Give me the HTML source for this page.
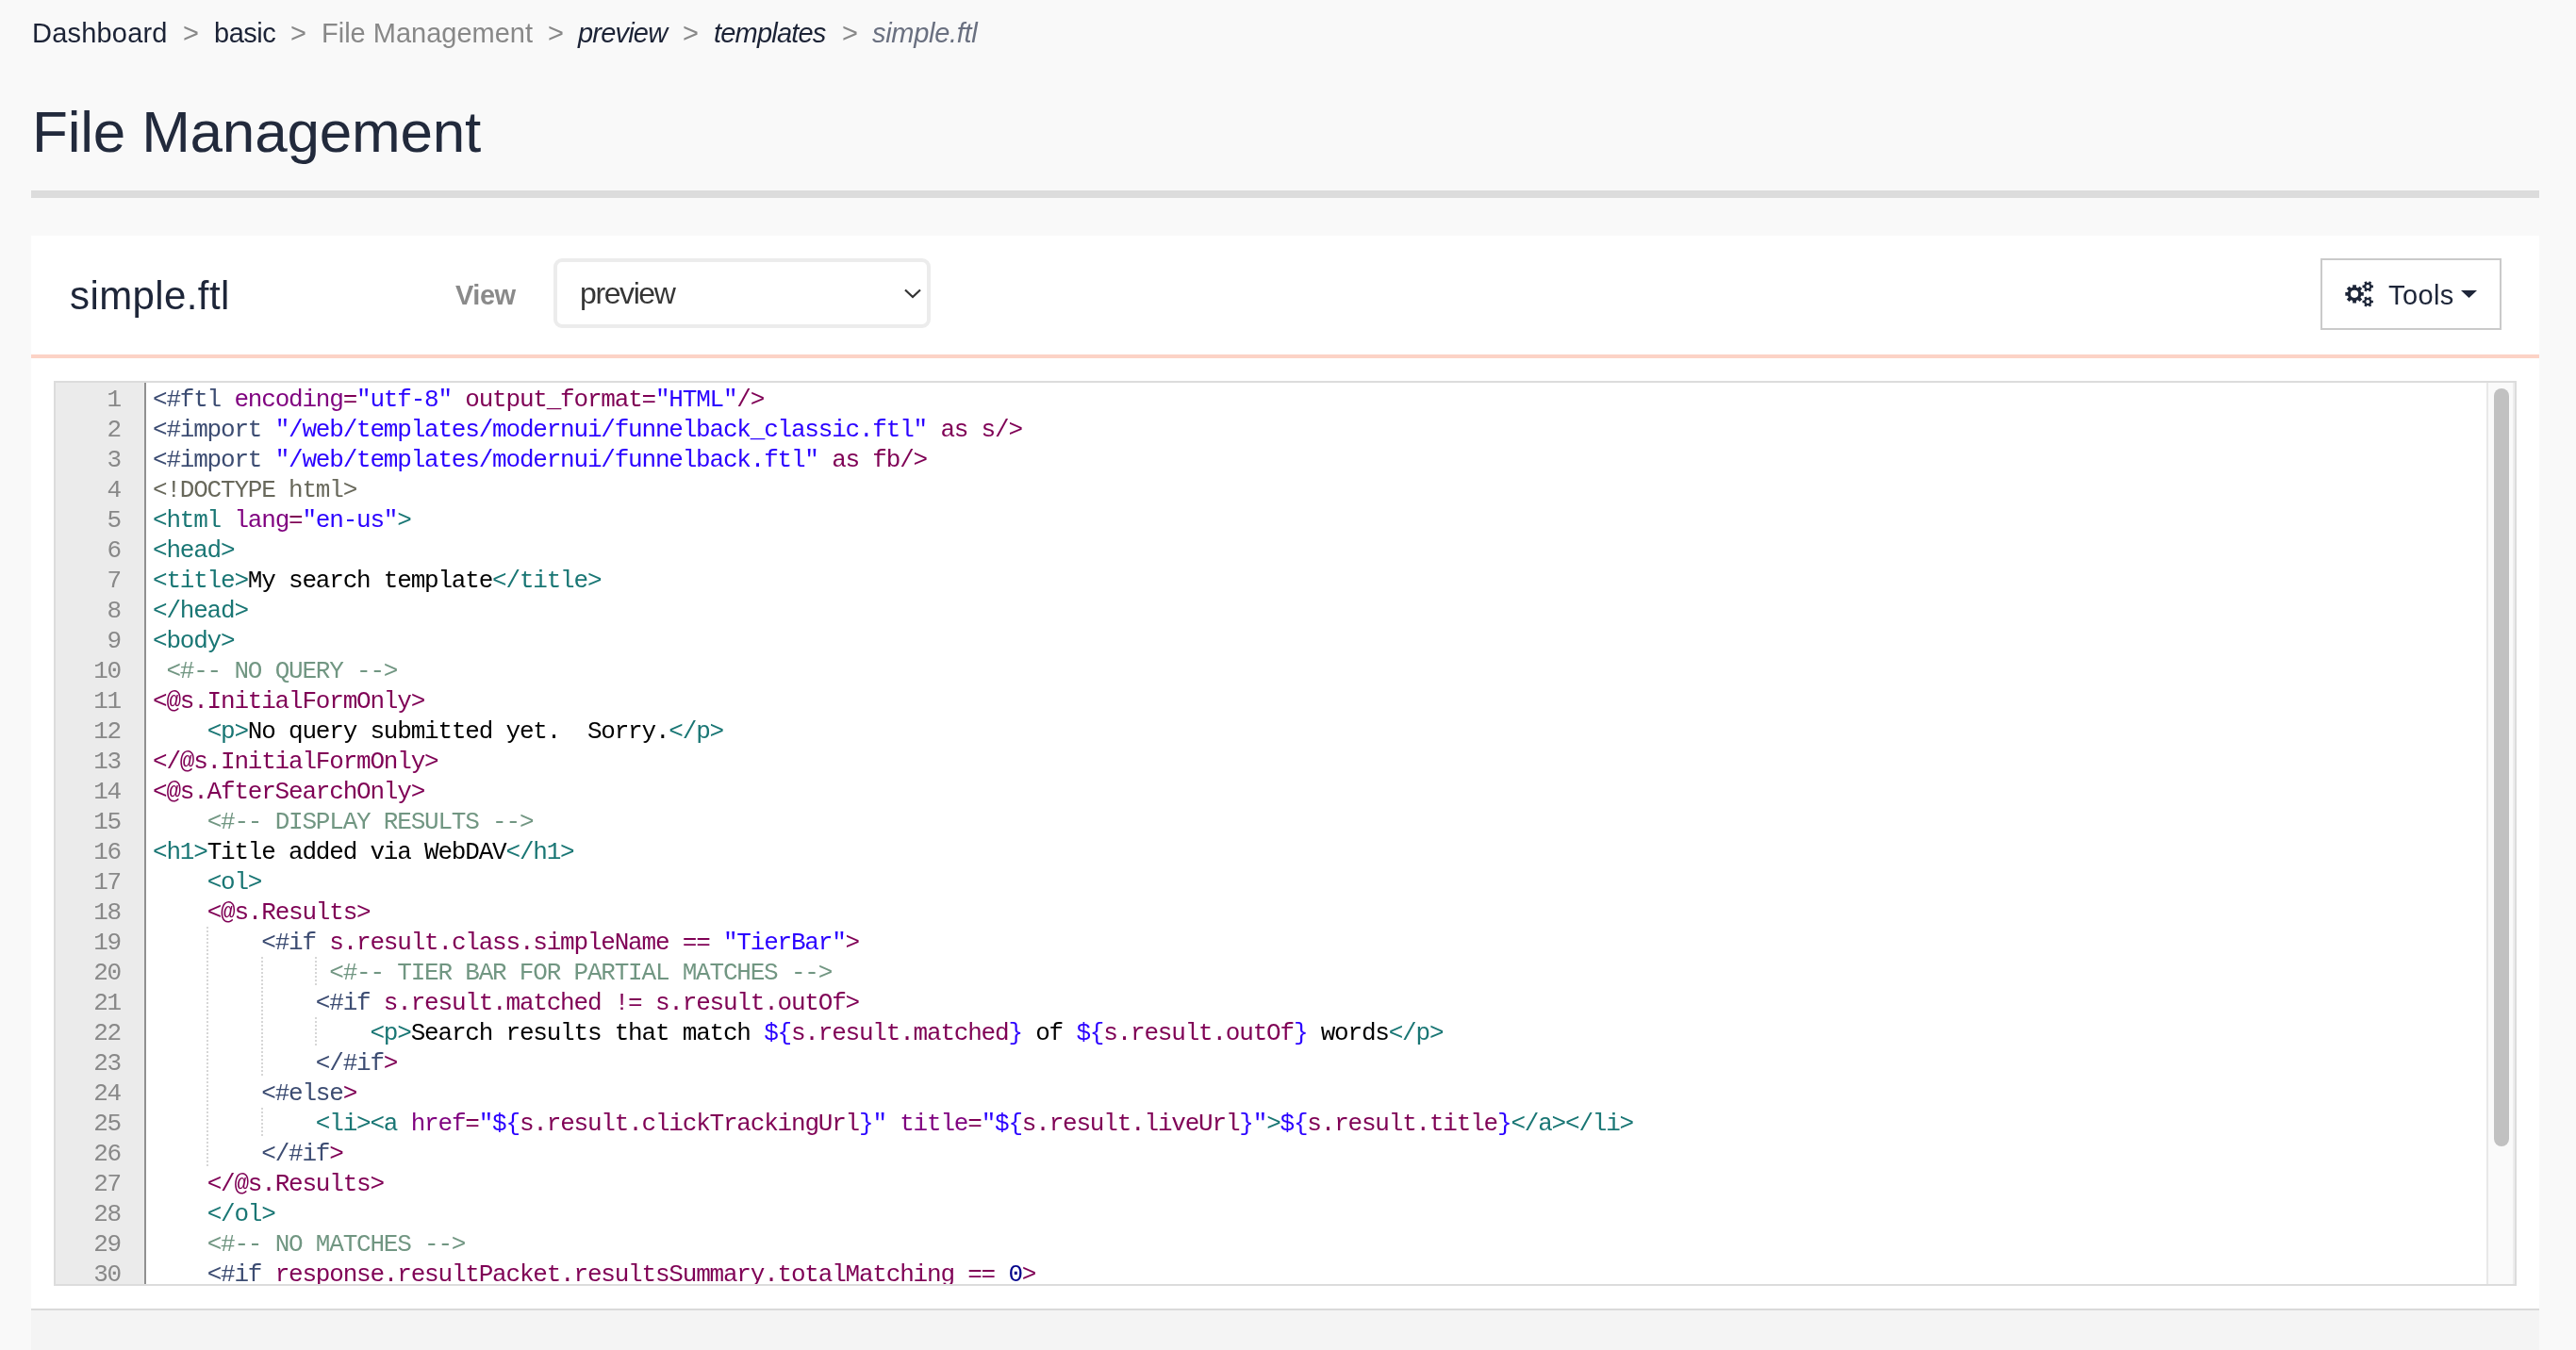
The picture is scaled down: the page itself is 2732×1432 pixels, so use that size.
<!DOCTYPE html>
<html><head><meta charset="utf-8">
<style>
html,body{margin:0;padding:0;} body>*{will-change:transform;}
body{width:2732px;height:1432px;overflow:hidden;background:#f9f9f9;position:relative;font-family:"Liberation Sans",sans-serif;color:#1e2639;}
.a{position:absolute;white-space:nowrap;}
.bc{font-size:29px;line-height:34px;top:18px;}
.g{color:#888;}
.navy{color:#1c2336;}
.it{font-style:italic;letter-spacing:-0.8px;}
h1{position:absolute;margin:0;font-weight:normal;font-size:62px;line-height:70px;left:34px;top:105px;color:#222a3c;letter-spacing:-0.2px;}
#bar{position:absolute;left:33px;top:202px;width:2660px;height:8px;background:#dcdcdc;}
#panel{position:absolute;left:33px;top:250px;width:2660px;height:1138px;background:#fff;}
#salmon{position:absolute;left:33px;top:376px;width:2660px;height:4px;background:#fcd3c6;}
#foot{position:absolute;left:33px;top:1388px;width:2660px;height:44px;background:#f4f4f4;border-top:2px solid #d9d9d9;box-sizing:border-box;}
#fname{font-size:42px;line-height:50px;left:73.5px;top:289px;color:#1e2639;letter-spacing:0.4px;}
#view{font-size:29px;font-weight:bold;color:#8a8a8a;left:483px;top:296px;line-height:34px;letter-spacing:-0.5px;}
#sel{position:absolute;left:587px;top:274px;width:400px;height:74px;box-sizing:border-box;border:4px solid #ececec;border-radius:9px;background:#fff;}
#seltxt{font-size:32px;line-height:38px;left:615px;top:292px;color:#363636;letter-spacing:-1.4px;}
#tools{position:absolute;left:2461px;top:274px;width:192px;height:76px;box-sizing:border-box;border:2px solid #cacaca;background:#fff;}
#toolstxt{font-size:29px;line-height:34px;left:2533px;top:296px;color:#1e2639;letter-spacing:0.4px;}
#editor{position:absolute;left:57px;top:404px;width:2612px;height:960px;box-sizing:border-box;border:2px solid #dcdcdc;background:#fff;overflow:hidden;}
#gutter{position:absolute;left:0;top:0;width:94px;height:956px;background:#ebebeb;border-right:2px solid #909090;}
.gn{position:absolute;right:25px;margin-top:2px;height:32px;line-height:32px;font-family:"Liberation Mono",monospace;font-size:26px;letter-spacing:-1.2px;color:#888;}
#code{position:absolute;left:103px;top:0;width:2470px;height:956px;}
.ln{position:absolute;left:0;margin-top:2px;height:32px;line-height:32px;white-space:pre;font-family:"Liberation Mono",monospace;font-size:26px;letter-spacing:-1.2px;color:#000;}
.ig{position:absolute;width:2px;height:32px;background-image:linear-gradient(transparent 25%,#d6d6d6 25%,#d6d6d6 75%,transparent 75%);background-size:2px 4px;}
.f{color:#3c4c72}.k{color:#7f0055}.p{color:#7f007f}.s{color:#2a00ff}.t{color:#197674}.c{color:#719682}.d{color:#68685b}.x{color:#000}.n{color:#00008b}
#track{position:absolute;left:2578px;top:0;width:30px;height:956px;box-sizing:border-box;background:#fafafa;border-left:2px solid #e8e8e8;border-right:2px solid #ededed;}
#thumb{position:absolute;left:6px;top:6px;width:16px;height:804px;border-radius:8px;background:#c1c1c1;}
</style></head><body>
<div class="a bc navy" style="left:34px;letter-spacing:0.2px">Dashboard</div>
<div class="a bc g" style="left:194px">&gt;</div>
<div class="a bc navy" style="left:227px;letter-spacing:-0.5px">basic</div>
<div class="a bc g" style="left:308px">&gt;</div>
<div class="a bc g" style="left:341px">File Management</div>
<div class="a bc g" style="left:581px">&gt;</div>
<div class="a bc navy it" style="left:613px">preview</div>
<div class="a bc g" style="left:724px">&gt;</div>
<div class="a bc navy it" style="left:757px">templates</div>
<div class="a bc g" style="left:893px">&gt;</div>
<div class="a bc it" style="left:925px;color:#6a7080;letter-spacing:-0.3px">simple.ftl</div>
<h1>File Management</h1>
<div id="bar"></div>
<div id="panel"></div>
<div id="salmon"></div>
<div id="foot"></div>
<div id="fname" class="a">simple.ftl</div>
<div id="view" class="a">View</div>
<div id="sel"></div>
<div id="seltxt" class="a">preview</div>
<svg class="a" style="left:959px;top:306px" width="18" height="11" viewBox="0 0 18 11"><path d="M1 1.5 L9 9 L17 1.5" fill="none" stroke="#333" stroke-width="2.2"/></svg>
<div id="tools"></div>
<svg class="a" style="left:2480px;top:292px" width="44" height="40" viewBox="0 0 44 40"><path fill="#1e2639" fill-rule="evenodd" d="M15.14 12.80 L15.14 10.13 L18.94 10.13 L18.94 12.80 L19.24 12.89 L19.54 12.99 L19.83 13.11 L20.12 13.23 L20.40 13.37 L20.68 13.52 L22.57 11.64 L25.25 14.32 L23.37 16.21 L23.52 16.49 L23.66 16.77 L23.78 17.06 L23.90 17.35 L24.00 17.65 L24.09 17.95 L26.76 17.95 L26.76 21.75 L24.09 21.75 L24.00 22.05 L23.90 22.35 L23.78 22.64 L23.66 22.93 L23.52 23.21 L23.37 23.49 L25.25 25.38 L22.57 28.06 L20.68 26.18 L20.40 26.33 L20.12 26.47 L19.83 26.59 L19.54 26.71 L19.24 26.81 L18.94 26.90 L18.94 29.57 L15.14 29.57 L15.14 26.90 L14.84 26.81 L14.54 26.71 L14.25 26.59 L13.96 26.47 L13.68 26.33 L13.40 26.18 L11.51 28.06 L8.83 25.38 L10.71 23.49 L10.56 23.21 L10.42 22.93 L10.30 22.64 L10.18 22.35 L10.08 22.05 L9.99 21.75 L7.32 21.75 L7.32 17.95 L9.99 17.95 L10.08 17.65 L10.18 17.35 L10.30 17.06 L10.42 16.77 L10.56 16.49 L10.71 16.21 L8.83 14.32 L11.51 11.64 L13.40 13.52 L13.68 13.37 L13.96 13.23 L14.25 13.11 L14.54 12.99 L14.84 12.89 Z M12.94 19.85 a4.10 4.10 0 1 0 8.20 0 a4.10 4.10 0 1 0 -8.20 0 Z M32.07 7.79 L32.93 6.31 L35.18 7.61 L34.32 9.09 L34.51 9.32 L34.68 9.55 L34.84 9.80 L34.97 10.06 L35.09 10.33 L35.19 10.60 L36.90 10.60 L36.90 13.20 L35.19 13.20 L35.09 13.47 L34.97 13.74 L34.84 14.00 L34.68 14.25 L34.51 14.48 L34.32 14.71 L35.18 16.19 L32.93 17.49 L32.07 16.01 L31.78 16.06 L31.49 16.09 L31.20 16.10 L30.91 16.09 L30.62 16.06 L30.33 16.01 L29.47 17.49 L27.22 16.19 L28.08 14.71 L27.89 14.48 L27.72 14.25 L27.56 14.00 L27.43 13.74 L27.31 13.47 L27.21 13.20 L25.50 13.20 L25.50 10.60 L27.21 10.60 L27.31 10.33 L27.43 10.06 L27.56 9.80 L27.72 9.55 L27.89 9.32 L28.08 9.09 L27.22 7.61 L29.47 6.31 L30.33 7.79 L30.62 7.74 L30.91 7.71 L31.20 7.70 L31.49 7.71 L31.78 7.74 Z M29.25 11.90 a1.95 1.95 0 1 0 3.90 0 a1.95 1.95 0 1 0 -3.90 0 Z M32.07 23.89 L32.93 22.41 L35.18 23.71 L34.32 25.19 L34.51 25.42 L34.68 25.65 L34.84 25.90 L34.97 26.16 L35.09 26.43 L35.19 26.70 L36.90 26.70 L36.90 29.30 L35.19 29.30 L35.09 29.57 L34.97 29.84 L34.84 30.10 L34.68 30.35 L34.51 30.58 L34.32 30.81 L35.18 32.29 L32.93 33.59 L32.07 32.11 L31.78 32.16 L31.49 32.19 L31.20 32.20 L30.91 32.19 L30.62 32.16 L30.33 32.11 L29.47 33.59 L27.22 32.29 L28.08 30.81 L27.89 30.58 L27.72 30.35 L27.56 30.10 L27.43 29.84 L27.31 29.57 L27.21 29.30 L25.50 29.30 L25.50 26.70 L27.21 26.70 L27.31 26.43 L27.43 26.16 L27.56 25.90 L27.72 25.65 L27.89 25.42 L28.08 25.19 L27.22 23.71 L29.47 22.41 L30.33 23.89 L30.62 23.84 L30.91 23.81 L31.20 23.80 L31.49 23.81 L31.78 23.84 Z M29.25 28.00 a1.95 1.95 0 1 0 3.90 0 a1.95 1.95 0 1 0 -3.90 0 Z"/></svg>
<div id="toolstxt" class="a">Tools</div>
<svg class="a" style="left:2610px;top:308px" width="17" height="8" viewBox="0 0 17 8"><path d="M0 0 H17 L8.5 8 Z" fill="#1e2639"/></svg>
<div id="editor">
 <div id="gutter">
<div class="gn" style="top:0px">1</div>
<div class="gn" style="top:32px">2</div>
<div class="gn" style="top:64px">3</div>
<div class="gn" style="top:96px">4</div>
<div class="gn" style="top:128px">5</div>
<div class="gn" style="top:160px">6</div>
<div class="gn" style="top:192px">7</div>
<div class="gn" style="top:224px">8</div>
<div class="gn" style="top:256px">9</div>
<div class="gn" style="top:288px">10</div>
<div class="gn" style="top:320px">11</div>
<div class="gn" style="top:352px">12</div>
<div class="gn" style="top:384px">13</div>
<div class="gn" style="top:416px">14</div>
<div class="gn" style="top:448px">15</div>
<div class="gn" style="top:480px">16</div>
<div class="gn" style="top:512px">17</div>
<div class="gn" style="top:544px">18</div>
<div class="gn" style="top:576px">19</div>
<div class="gn" style="top:608px">20</div>
<div class="gn" style="top:640px">21</div>
<div class="gn" style="top:672px">22</div>
<div class="gn" style="top:704px">23</div>
<div class="gn" style="top:736px">24</div>
<div class="gn" style="top:768px">25</div>
<div class="gn" style="top:800px">26</div>
<div class="gn" style="top:832px">27</div>
<div class="gn" style="top:864px">28</div>
<div class="gn" style="top:896px">29</div>
<div class="gn" style="top:928px">30</div>
 </div>
 <div id="code">
<div class="ig" style="top:576px;left:57.1px"></div>
<div class="ig" style="top:608px;left:57.1px"></div>
<div class="ig" style="top:608px;left:114.7px"></div>
<div class="ig" style="top:608px;left:172.3px"></div>
<div class="ig" style="top:640px;left:57.1px"></div>
<div class="ig" style="top:640px;left:114.7px"></div>
<div class="ig" style="top:672px;left:57.1px"></div>
<div class="ig" style="top:672px;left:114.7px"></div>
<div class="ig" style="top:672px;left:172.3px"></div>
<div class="ig" style="top:704px;left:57.1px"></div>
<div class="ig" style="top:704px;left:114.7px"></div>
<div class="ig" style="top:736px;left:57.1px"></div>
<div class="ig" style="top:768px;left:57.1px"></div>
<div class="ig" style="top:768px;left:114.7px"></div>
<div class="ig" style="top:800px;left:57.1px"></div>
<div class="ln" style="top:0px"><span class="f">&lt;#ftl</span> <span class="p">encoding</span><span class="k">=</span><span class="s">&quot;utf-8&quot;</span> <span class="k">output_format=</span><span class="s">&quot;HTML&quot;</span><span class="k">/&gt;</span></div>
<div class="ln" style="top:32px"><span class="f">&lt;#import</span> <span class="s">&quot;/web/templates/modernui/funnelback_classic.ftl&quot;</span> <span class="k">as s/&gt;</span></div>
<div class="ln" style="top:64px"><span class="f">&lt;#import</span> <span class="s">&quot;/web/templates/modernui/funnelback.ftl&quot;</span> <span class="k">as fb/&gt;</span></div>
<div class="ln" style="top:96px"><span class="d">&lt;!DOCTYPE html&gt;</span></div>
<div class="ln" style="top:128px"><span class="t">&lt;html</span> <span class="p">lang</span><span class="k">=</span><span class="s">&quot;en-us&quot;</span><span class="t">&gt;</span></div>
<div class="ln" style="top:160px"><span class="t">&lt;head&gt;</span></div>
<div class="ln" style="top:192px"><span class="t">&lt;title&gt;</span><span class="x">My search template</span><span class="t">&lt;/title&gt;</span></div>
<div class="ln" style="top:224px"><span class="t">&lt;/head&gt;</span></div>
<div class="ln" style="top:256px"><span class="t">&lt;body&gt;</span></div>
<div class="ln" style="top:288px"> <span class="c">&lt;#-- NO QUERY --&gt;</span></div>
<div class="ln" style="top:320px"><span class="k">&lt;@s.InitialFormOnly&gt;</span></div>
<div class="ln" style="top:352px">    <span class="t">&lt;p&gt;</span><span class="x">No query submitted yet.  Sorry.</span><span class="t">&lt;/p&gt;</span></div>
<div class="ln" style="top:384px"><span class="k">&lt;/@s.InitialFormOnly&gt;</span></div>
<div class="ln" style="top:416px"><span class="k">&lt;@s.AfterSearchOnly&gt;</span></div>
<div class="ln" style="top:448px">    <span class="c">&lt;#-- DISPLAY RESULTS --&gt;</span></div>
<div class="ln" style="top:480px"><span class="t">&lt;h1&gt;</span><span class="x">Title added via WebDAV</span><span class="t">&lt;/h1&gt;</span></div>
<div class="ln" style="top:512px">    <span class="t">&lt;ol&gt;</span></div>
<div class="ln" style="top:544px">    <span class="k">&lt;@s.Results&gt;</span></div>
<div class="ln" style="top:576px">        <span class="f">&lt;#if</span><span class="k"> s.result.class.simpleName == </span><span class="s">&quot;TierBar&quot;</span><span class="k">&gt;</span></div>
<div class="ln" style="top:608px">             <span class="c">&lt;#-- TIER BAR FOR PARTIAL MATCHES --&gt;</span></div>
<div class="ln" style="top:640px">            <span class="f">&lt;#if</span><span class="k"> s.result.matched != s.result.outOf&gt;</span></div>
<div class="ln" style="top:672px">                <span class="t">&lt;p&gt;</span><span class="x">Search results that match </span><span class="s">${</span><span class="k">s.result.matched</span><span class="s">}</span><span class="x"> of </span><span class="s">${</span><span class="k">s.result.outOf</span><span class="s">}</span><span class="x"> words</span><span class="t">&lt;/p&gt;</span></div>
<div class="ln" style="top:704px">            <span class="f">&lt;/#if</span><span class="k">&gt;</span></div>
<div class="ln" style="top:736px">        <span class="f">&lt;#else</span><span class="k">&gt;</span></div>
<div class="ln" style="top:768px">            <span class="t">&lt;li&gt;&lt;a</span> <span class="p">href</span><span class="k">=</span><span class="s">&quot;${</span><span class="k">s.result.clickTrackingUrl</span><span class="s">}&quot;</span> <span class="p">title</span><span class="k">=</span><span class="s">&quot;${</span><span class="k">s.result.liveUrl</span><span class="s">}&quot;</span><span class="t">&gt;</span><span class="s">${</span><span class="k">s.result.title</span><span class="s">}</span><span class="t">&lt;/a&gt;&lt;/li&gt;</span></div>
<div class="ln" style="top:800px">        <span class="f">&lt;/#if</span><span class="k">&gt;</span></div>
<div class="ln" style="top:832px">    <span class="k">&lt;/@s.Results&gt;</span></div>
<div class="ln" style="top:864px">    <span class="t">&lt;/ol&gt;</span></div>
<div class="ln" style="top:896px">    <span class="c">&lt;#-- NO MATCHES --&gt;</span></div>
<div class="ln" style="top:928px">    <span class="f">&lt;#if</span><span class="k"> response.resultPacket.resultsSummary.totalMatching == </span><span class="n">0</span><span class="k">&gt;</span></div>
 </div>
 <div id="track"><div id="thumb"></div></div>
</div>
</body></html>
